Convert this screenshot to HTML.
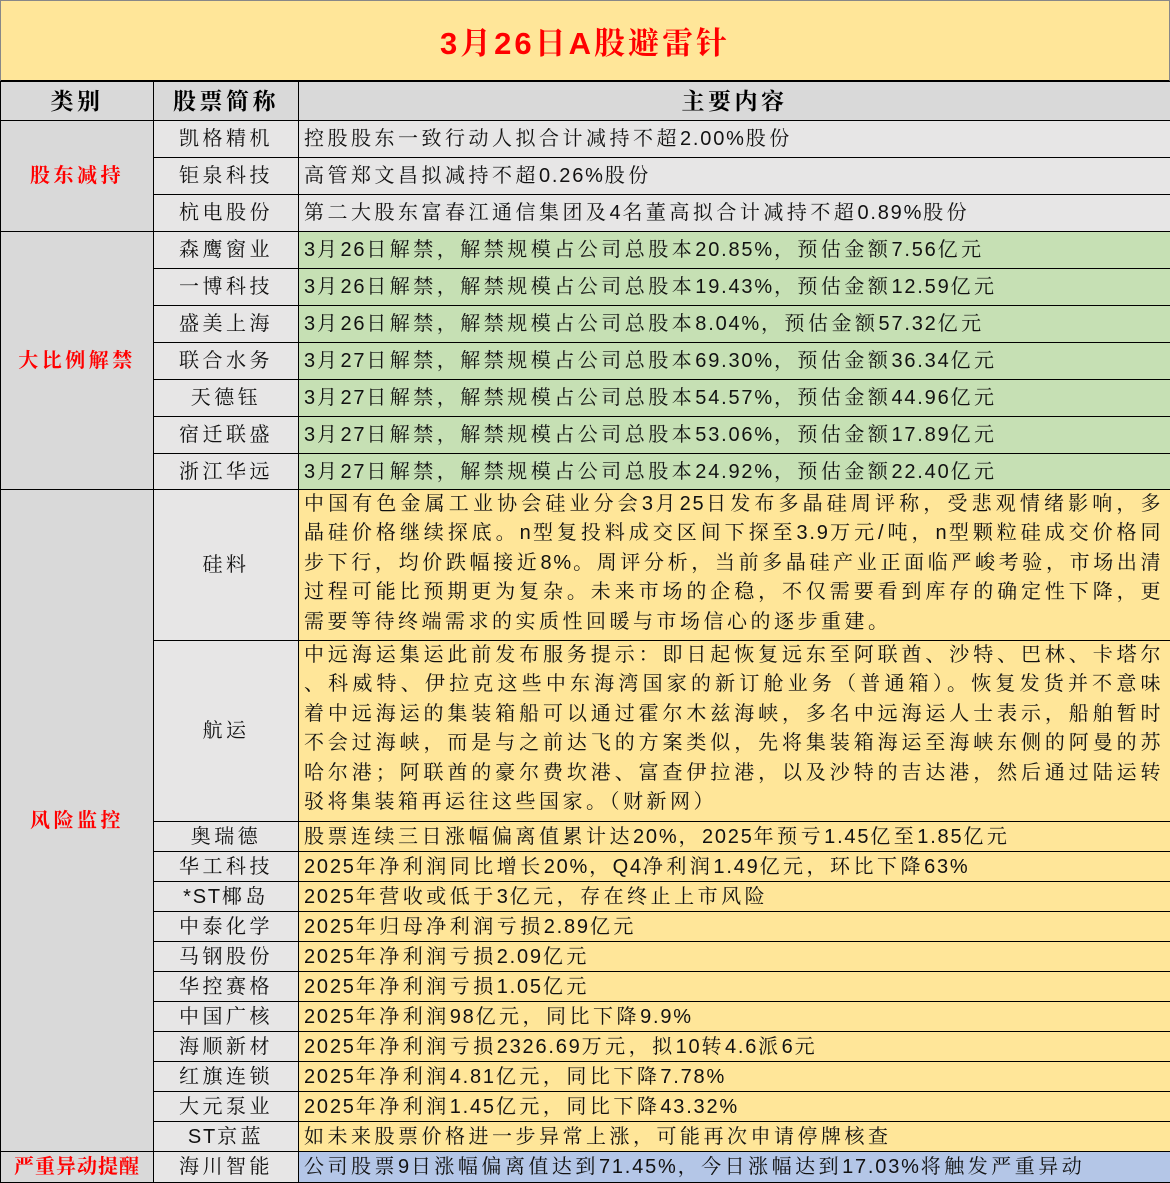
<!DOCTYPE html>
<html><head><meta charset="utf-8"><style>
*{margin:0;padding:0;box-sizing:border-box}
body{width:1170px;height:1181px;overflow:hidden;background:#fff;font-family:"Liberation Sans","Noto Serif CJK SC",serif;color:#111}
.title{position:absolute;left:0;top:0;width:1170px;height:82px;background:#ffe699;border:1px solid #888;border-bottom:2px solid #000;text-align:center;color:#f00;font-size:31px;font-weight:bold;line-height:86px;letter-spacing:3px}
table{position:absolute;left:0;top:81px;border-collapse:collapse;table-layout:fixed;width:1170px}
td{border:1.5px solid #000;font-size:20px;letter-spacing:3.5px;white-space:nowrap;overflow:hidden;padding:0;line-height:24px}
td.c1{background:#d9d9d9;text-align:center;color:#f00;font-weight:bold}
td.c2{background:#e7e6e6;text-align:center}
td.c3{padding-left:5px}
.h td{background:#d9d9d9;text-align:center;font-weight:bold;font-size:23px;color:#000}
.g{background:#e7e6e6}.gr{background:#c6e0b4}.y{background:#ffe699}.b{background:#b4c6e7}
td.p{line-height:29.4px;padding:0 6px 0 5px;vertical-align:top}
.p div{text-align:justify;text-align-last:justify;height:29.4px;overflow:hidden}
.p div.l{text-align-last:left}
n{letter-spacing:1.8px}
</style></head><body>
<div class="title">3月26日A股避雷针</div>
<table>
<colgroup><col style="width:153px"><col style="width:145px"><col style="width:872px"></colgroup>
<tr class="h" style="height:39px"><td>类别</td><td>股票简称</td><td>主要内容</td></tr>
<tr style="height:37px"><td class="c1" rowspan="3">股东减持</td><td class="c2">凯格精机</td><td class="c3 g">控股股东一致行动人拟合计减持不超<n>2.00%</n>股份</td></tr>
<tr style="height:37px"><td class="c2">钜泉科技</td><td class="c3 g">高管郑文昌拟减持不超<n>0.26%</n>股份</td></tr>
<tr style="height:37px"><td class="c2">杭电股份</td><td class="c3 g">第二大股东富春江通信集团及<n>4</n>名董高拟合计减持不超<n>0.89%</n>股份</td></tr>
<tr style="height:37px"><td class="c1" rowspan="7">大比例解禁</td><td class="c2">森鹰窗业</td><td class="c3 gr"><n>3</n>月<n>26</n>日解禁，解禁规模占公司总股本<n>20.85%</n>，预估金额<n>7.56</n>亿元</td></tr>
<tr style="height:37px"><td class="c2">一博科技</td><td class="c3 gr"><n>3</n>月<n>26</n>日解禁，解禁规模占公司总股本<n>19.43%</n>，预估金额<n>12.59</n>亿元</td></tr>
<tr style="height:37px"><td class="c2">盛美上海</td><td class="c3 gr"><n>3</n>月<n>26</n>日解禁，解禁规模占公司总股本<n>8.04%</n>，预估金额<n>57.32</n>亿元</td></tr>
<tr style="height:37px"><td class="c2">联合水务</td><td class="c3 gr"><n>3</n>月<n>27</n>日解禁，解禁规模占公司总股本<n>69.30%</n>，预估金额<n>36.34</n>亿元</td></tr>
<tr style="height:37px"><td class="c2">天德钰</td><td class="c3 gr"><n>3</n>月<n>27</n>日解禁，解禁规模占公司总股本<n>54.57%</n>，预估金额<n>44.96</n>亿元</td></tr>
<tr style="height:37px"><td class="c2">宿迁联盛</td><td class="c3 gr"><n>3</n>月<n>27</n>日解禁，解禁规模占公司总股本<n>53.06%</n>，预估金额<n>17.89</n>亿元</td></tr>
<tr style="height:36px"><td class="c2">浙江华远</td><td class="c3 gr"><n>3</n>月<n>27</n>日解禁，解禁规模占公司总股本<n>24.92%</n>，预估金额<n>22.40</n>亿元</td></tr>
<tr style="height:151px"><td class="c1" rowspan="13">风险监控</td><td class="c2">硅料</td><td class="c3 y p">
<div>中国有色金属工业协会硅业分会<n>3</n>月<n>25</n>日发布多晶硅周评称，受悲观情绪影响，多</div>
<div>晶硅价格继续探底。<n>n</n>型复投料成交区间下探至<n>3.9</n>万元/吨，<n>n</n>型颗粒硅成交价格同</div>
<div>步下行，均价跌幅接近<n>8%</n>。周评分析，当前多晶硅产业正面临严峻考验，市场出清</div>
<div>过程可能比预期更为复杂。未来市场的企稳，不仅需要看到库存的确定性下降，更</div>
<div class="l">需要等待终端需求的实质性回暖与市场信心的逐步重建。</div></td></tr>
<tr style="height:181px"><td class="c2">航运</td><td class="c3 y p">
<div>中远海运集运此前发布服务提示：即日起恢复远东至阿联酋、沙特、巴林、卡塔尔</div>
<div>、科威特、伊拉克这些中东海湾国家的新订舱业务（普通箱）。恢复发货并不意味</div>
<div>着中远海运的集装箱船可以通过霍尔木兹海峡，多名中远海运人士表示，船舶暂时</div>
<div>不会过海峡，而是与之前达飞的方案类似，先将集装箱海运至海峡东侧的阿曼的苏</div>
<div>哈尔港；阿联酋的豪尔费坎港、富查伊拉港，以及沙特的吉达港，然后通过陆运转</div>
<div class="l">驳将集装箱再运往这些国家。（财新网）</div></td></tr>
<tr style="height:30px"><td class="c2">奥瑞德</td><td class="c3 y">股票连续三日涨幅偏离值累计达<n>20%</n>，<n>2025</n>年预亏<n>1.45</n>亿至<n>1.85</n>亿元</td></tr>
<tr style="height:30px"><td class="c2">华工科技</td><td class="c3 y"><n>2025</n>年净利润同比增长<n>20%</n>，<n>Q4</n>净利润<n>1.49</n>亿元，环比下降<n>63%</n></td></tr>
<tr style="height:30px"><td class="c2"><n>*ST</n>椰岛</td><td class="c3 y"><n>2025</n>年营收或低于<n>3</n>亿元，存在终止上市风险</td></tr>
<tr style="height:30px"><td class="c2">中泰化学</td><td class="c3 y"><n>2025</n>年归母净利润亏损<n>2.89</n>亿元</td></tr>
<tr style="height:30px"><td class="c2">马钢股份</td><td class="c3 y"><n>2025</n>年净利润亏损<n>2.09</n>亿元</td></tr>
<tr style="height:30px"><td class="c2">华控赛格</td><td class="c3 y"><n>2025</n>年净利润亏损<n>1.05</n>亿元</td></tr>
<tr style="height:30px"><td class="c2">中国广核</td><td class="c3 y"><n>2025</n>年净利润<n>98</n>亿元，同比下降<n>9.9%</n></td></tr>
<tr style="height:30px"><td class="c2">海顺新材</td><td class="c3 y"><n>2025</n>年净利润亏损<n>2326.69</n>万元，拟<n>10</n>转<n>4.6</n>派<n>6</n>元</td></tr>
<tr style="height:30px"><td class="c2">红旗连锁</td><td class="c3 y"><n>2025</n>年净利润<n>4.81</n>亿元，同比下降<n>7.78%</n></td></tr>
<tr style="height:30px"><td class="c2">大元泵业</td><td class="c3 y"><n>2025</n>年净利润<n>1.45</n>亿元，同比下降<n>43.32%</n></td></tr>
<tr style="height:30px"><td class="c2"><n>ST</n>京蓝</td><td class="c3 y">如未来股票价格进一步异常上涨，可能再次申请停牌核查</td></tr>
<tr style="height:31px"><td class="c1" style="letter-spacing:1px;font-size:20px">严重异动提醒</td><td class="c2">海川智能</td><td class="c3 b">公司股票<n>9</n>日涨幅偏离值达到<n>71.45%</n>，今日涨幅达到<n>17.03%</n>将触发严重异动</td></tr>
</table>
</body></html>
